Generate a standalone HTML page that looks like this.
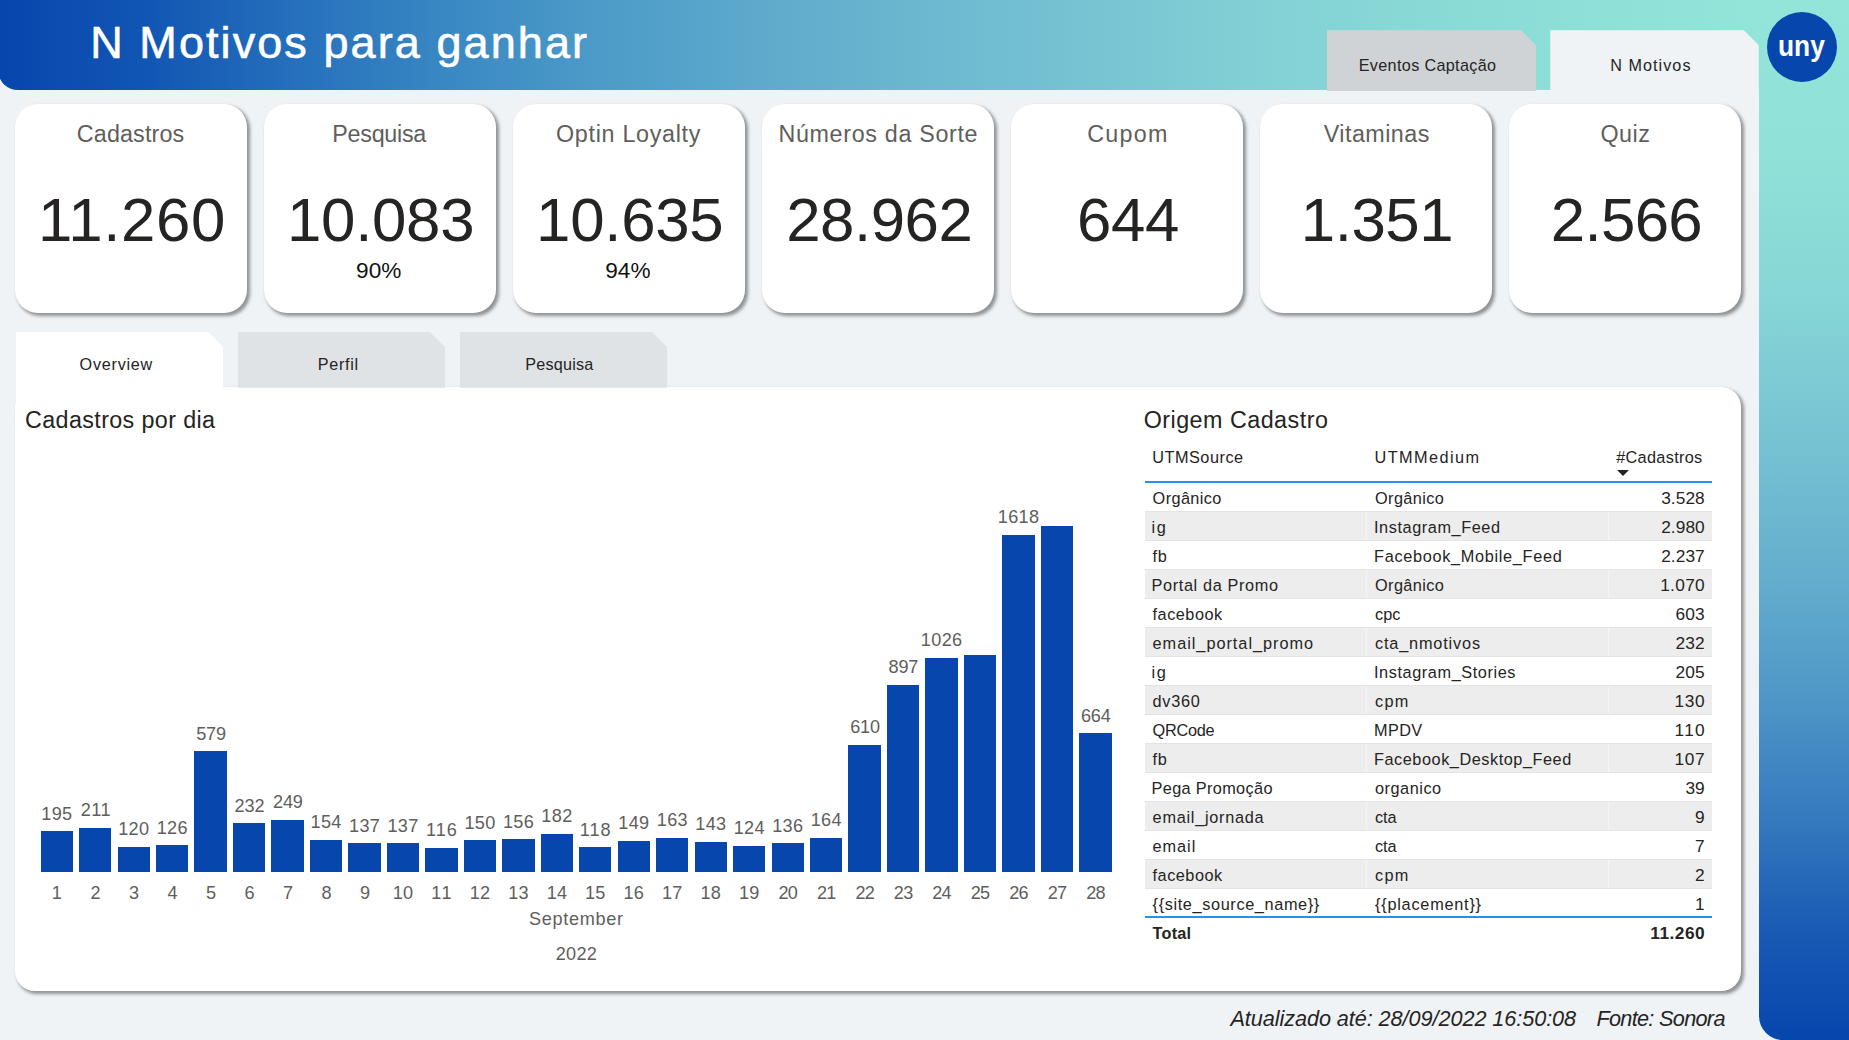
<!DOCTYPE html>
<html lang="pt-BR"><head><meta charset="utf-8"><title>N Motivos para ganhar</title>
<style>
html,body{margin:0;padding:0;}
body{width:1849px;height:1040px;overflow:hidden;position:relative;background:#eff3f6;font-family:"Liberation Sans", sans-serif;}
.abs{position:absolute;}
.t{color:#252423;position:absolute;white-space:nowrap;line-height:1;margin:0;padding:0;}
.hdr{left:-2.5px;top:0;width:1762.5px;height:89.6px;border-bottom-left-radius:20px;
 background:linear-gradient(to right,#0646ad 0px,#1256b4 150px,#2670bc 300px,#3a88c3 450px,#4c9bc8 600px,#5ca9cc 750px,#6cb8d0 924px,#78c4d3 1100px,#82d0d5 1250px,#88d8d6 1400px,#90e2d8 1650px,#92e5d9 1760px);}
.side{left:1759px;top:0;width:90px;height:1040px;border-bottom-left-radius:24px;
 background:linear-gradient(to bottom,#92e5d9 0px,#90e2d8 150px,#86d6d6 300px,#76c1d2 450px,#64adcd 580px,#4d97c7 700px,#337abe 820px,#185bb4 930px,#0646ad 1040px);}
.card{background:#fff;border-radius:23px;box-shadow:2.5px 2.5px 3.5px rgba(0,0,0,.4);}
.tab{position:absolute;}
.panel{background:#fff;border-radius:20px;box-shadow:2.5px 2.5px 3.5px rgba(0,0,0,.4);}
.bar{position:absolute;background:#0646ad;}
.row{position:absolute;left:1144.5px;width:567px;height:29px;box-sizing:border-box;}
.row.g{background:#ededed;height:30px;}
.row i{position:absolute;top:1px;bottom:1px;width:1px;background:#f4f4f4;}
.gl{position:absolute;left:1144.5px;width:567px;height:1px;background:#e4e4e4;}

</style></head><body>
<header class="g-header">
<div class="abs hdr"></div>
<div class="abs side"></div>
<div class="tab" style="left:1326.7px;top:30.2px;width:209.2px;height:60.7px;background:#d0d3d6;clip-path:polygon(0 0,194.2px 0,209.2px 15px,209.2px 60.7px,0 60.7px);"></div>
<div class="tab" style="left:1550.3px;top:30.2px;width:208.5px;height:61.8px;background:#eff3f6;clip-path:polygon(0 0,193.5px 0,208.5px 15px,208.5px 61.8px,0 61.8px);"></div>
<div class="abs" style="left:1766.8px;top:12.2px;width:70.2px;height:70.2px;border-radius:50%;background:#0646ad;"></div>
<div class="t" style="left:1358.70px;top:57px;font-size:16.2px;letter-spacing:0.341px;">Eventos Captação</div>
<div class="t" style="left:1610.20px;top:57px;font-size:16.2px;letter-spacing:1.042px;">N Motivos</div>
<div class="t" style="left:1777.92px;top:31px;font-size:30px;color:#fff;font-weight:bold;transform:scaleX(0.8775);transform-origin:0 50%;">uny</div>
<div class="t" style="left:90.20px;top:20px;font-size:45px;color:#fff;-webkit-text-stroke:0.6px #fff;letter-spacing:2.078px;">N Motivos para ganhar</div>
</header>
<section class="g-kpis">
<div class="abs card" style="left:14.6px;top:104.3px;width:232.3px;height:208.7px;"></div>
<div class="abs card" style="left:263.7px;top:104.3px;width:232.3px;height:208.7px;"></div>
<div class="abs card" style="left:512.8px;top:104.3px;width:232.3px;height:208.7px;"></div>
<div class="abs card" style="left:761.9px;top:104.3px;width:232.3px;height:208.7px;"></div>
<div class="abs card" style="left:1011.0px;top:104.3px;width:232.3px;height:208.7px;"></div>
<div class="abs card" style="left:1260.1px;top:104.3px;width:232.3px;height:208.7px;"></div>
<div class="abs card" style="left:1509.2px;top:104.3px;width:232.3px;height:208.7px;"></div>
<div class="t" style="left:76.80px;top:123px;font-size:23.3px;color:#605e5c;letter-spacing:0.158px;">Cadastros</div>
<div class="t" style="left:37.91px;top:189px;font-size:61.8px;letter-spacing:0.625px;">11.260</div>
<div class="t" style="left:332.25px;top:123px;font-size:23.3px;color:#605e5c;letter-spacing:-0.255px;">Pesquisa</div>
<div class="t" style="left:287.01px;top:189px;font-size:61.8px;letter-spacing:-0.293px;">10.083</div>
<div class="t" style="left:356.07px;top:260px;font-size:22.6px;color:#111;letter-spacing:0.064px;">90%</div>
<div class="t" style="left:556.04px;top:123px;font-size:23.3px;color:#605e5c;letter-spacing:0.700px;">Optin Loyalty</div>
<div class="t" style="left:536.11px;top:189px;font-size:61.8px;letter-spacing:-0.293px;">10.635</div>
<div class="t" style="left:605.17px;top:260px;font-size:22.6px;color:#111;letter-spacing:0.064px;">94%</div>
<div class="t" style="left:778.38px;top:123px;font-size:23.3px;color:#605e5c;letter-spacing:0.676px;">Números da Sorte</div>
<div class="t" style="left:786.21px;top:189px;font-size:61.8px;letter-spacing:-0.493px;">28.962</div>
<div class="t" style="left:1087.24px;top:123px;font-size:23.3px;color:#605e5c;letter-spacing:1.258px;">Cupom</div>
<div class="t" style="left:1076.88px;top:189px;font-size:61.8px;letter-spacing:-0.346px;">644</div>
<div class="t" style="left:1323.75px;top:123px;font-size:23.3px;color:#605e5c;letter-spacing:0.459px;">Vitaminas</div>
<div class="t" style="left:1300.71px;top:189px;font-size:61.8px;letter-spacing:-0.426px;">1.351</div>
<div class="t" style="left:1600.40px;top:123px;font-size:23.3px;color:#605e5c;letter-spacing:0.513px;">Quiz</div>
<div class="t" style="left:1550.81px;top:189px;font-size:61.8px;letter-spacing:-0.676px;">2.566</div>
</section>
<nav class="g-panel">
<div class="abs panel" style="left:14.5px;top:387px;width:1726.5px;height:603.6px;"></div>
<div class="tab" style="left:15.7px;top:332px;width:207.6px;height:68.0px;background:#fff;clip-path:polygon(0 0,192.6px 0,207.6px 15px,207.6px 68.0px,0 68.0px);"></div>
<div class="tab" style="left:237.9px;top:332px;width:207.1px;height:55.8px;background:#dfe3e6;clip-path:polygon(0 0,192.1px 0,207.1px 15px,207.1px 55.8px,0 55.8px);"></div>
<div class="tab" style="left:460px;top:332px;width:206.9px;height:55.8px;background:#dfe3e6;clip-path:polygon(0 0,191.9px 0,206.9px 15px,206.9px 55.8px,0 55.8px);"></div>
<div class="t" style="left:79.60px;top:356px;font-size:16.2px;letter-spacing:0.747px;">Overview</div>
<div class="t" style="left:317.80px;top:356px;font-size:16.2px;letter-spacing:0.663px;">Perfil</div>
<div class="t" style="left:525.30px;top:356px;font-size:16.2px;letter-spacing:0.202px;">Pesquisa</div>
</nav>
<section class="g-chart">
<div class="bar" style="left:40.60px;top:831.10px;width:32.3px;height:40.60px;"></div>
<div class="bar" style="left:79.07px;top:827.77px;width:32.3px;height:43.93px;"></div>
<div class="bar" style="left:117.54px;top:846.72px;width:32.3px;height:24.98px;"></div>
<div class="bar" style="left:156.01px;top:845.47px;width:32.3px;height:26.23px;"></div>
<div class="bar" style="left:194.48px;top:751.15px;width:32.3px;height:120.55px;"></div>
<div class="bar" style="left:232.95px;top:823.40px;width:32.3px;height:48.30px;"></div>
<div class="bar" style="left:271.42px;top:819.86px;width:32.3px;height:51.84px;"></div>
<div class="bar" style="left:309.89px;top:839.64px;width:32.3px;height:32.06px;"></div>
<div class="bar" style="left:348.36px;top:843.18px;width:32.3px;height:28.52px;"></div>
<div class="bar" style="left:386.83px;top:843.18px;width:32.3px;height:28.52px;"></div>
<div class="bar" style="left:425.30px;top:847.55px;width:32.3px;height:24.15px;"></div>
<div class="bar" style="left:463.77px;top:840.47px;width:32.3px;height:31.23px;"></div>
<div class="bar" style="left:502.24px;top:839.22px;width:32.3px;height:32.48px;"></div>
<div class="bar" style="left:540.71px;top:833.81px;width:32.3px;height:37.89px;"></div>
<div class="bar" style="left:579.18px;top:847.13px;width:32.3px;height:24.57px;"></div>
<div class="bar" style="left:617.65px;top:840.68px;width:32.3px;height:31.02px;"></div>
<div class="bar" style="left:656.12px;top:837.76px;width:32.3px;height:33.94px;"></div>
<div class="bar" style="left:694.59px;top:841.93px;width:32.3px;height:29.77px;"></div>
<div class="bar" style="left:733.06px;top:845.88px;width:32.3px;height:25.82px;"></div>
<div class="bar" style="left:771.53px;top:843.38px;width:32.3px;height:28.32px;"></div>
<div class="bar" style="left:810.00px;top:837.56px;width:32.3px;height:34.14px;"></div>
<div class="bar" style="left:848.47px;top:744.70px;width:32.3px;height:127.00px;"></div>
<div class="bar" style="left:886.94px;top:684.94px;width:32.3px;height:186.76px;"></div>
<div class="bar" style="left:925.41px;top:658.09px;width:32.3px;height:213.61px;"></div>
<div class="bar" style="left:963.88px;top:654.96px;width:32.3px;height:216.74px;"></div>
<div class="bar" style="left:1002.35px;top:534.83px;width:32.3px;height:336.87px;"></div>
<div class="bar" style="left:1040.82px;top:526.09px;width:32.3px;height:345.61px;"></div>
<div class="bar" style="left:1079.29px;top:733.46px;width:32.3px;height:138.24px;"></div>
<div class="t" style="left:25.00px;top:409px;font-size:23.3px;letter-spacing:0.386px;">Cadastros por dia</div>
<div class="t" style="left:41.26px;top:805px;font-size:18.1px;color:#605e5c;letter-spacing:0.327px;">195</div>
<div class="t" style="left:51.65px;top:884px;font-size:18.1px;color:#605e5c;">1</div>
<div class="t" style="left:80.73px;top:801px;font-size:18.1px;color:#605e5c;letter-spacing:0.499px;">211</div>
<div class="t" style="left:90.62px;top:884px;font-size:18.1px;color:#605e5c;">2</div>
<div class="t" style="left:118.20px;top:820px;font-size:18.1px;color:#605e5c;letter-spacing:0.327px;">120</div>
<div class="t" style="left:129.09px;top:884px;font-size:18.1px;color:#605e5c;">3</div>
<div class="t" style="left:156.67px;top:819px;font-size:18.1px;color:#605e5c;letter-spacing:0.327px;">126</div>
<div class="t" style="left:167.56px;top:884px;font-size:18.1px;color:#605e5c;">4</div>
<div class="t" style="left:196.14px;top:725px;font-size:18.1px;color:#605e5c;letter-spacing:-0.173px;">579</div>
<div class="t" style="left:206.03px;top:884px;font-size:18.1px;color:#605e5c;">5</div>
<div class="t" style="left:234.61px;top:797px;font-size:18.1px;color:#605e5c;letter-spacing:-0.173px;">232</div>
<div class="t" style="left:244.50px;top:884px;font-size:18.1px;color:#605e5c;">6</div>
<div class="t" style="left:273.08px;top:793px;font-size:18.1px;color:#605e5c;letter-spacing:-0.173px;">249</div>
<div class="t" style="left:282.97px;top:884px;font-size:18.1px;color:#605e5c;">7</div>
<div class="t" style="left:310.55px;top:813px;font-size:18.1px;color:#605e5c;letter-spacing:0.327px;">154</div>
<div class="t" style="left:321.44px;top:884px;font-size:18.1px;color:#605e5c;">8</div>
<div class="t" style="left:349.02px;top:817px;font-size:18.1px;color:#605e5c;letter-spacing:0.327px;">137</div>
<div class="t" style="left:359.91px;top:884px;font-size:18.1px;color:#605e5c;">9</div>
<div class="t" style="left:387.49px;top:817px;font-size:18.1px;color:#605e5c;letter-spacing:0.327px;">137</div>
<div class="t" style="left:392.75px;top:884px;font-size:18.1px;color:#605e5c;letter-spacing:0.206px;">10</div>
<div class="t" style="left:425.96px;top:821px;font-size:18.1px;color:#605e5c;letter-spacing:0.999px;">116</div>
<div class="t" style="left:431.22px;top:884px;font-size:18.1px;color:#605e5c;letter-spacing:1.549px;">11</div>
<div class="t" style="left:464.43px;top:814px;font-size:18.1px;color:#605e5c;letter-spacing:0.327px;">150</div>
<div class="t" style="left:469.69px;top:884px;font-size:18.1px;color:#605e5c;letter-spacing:0.206px;">12</div>
<div class="t" style="left:502.90px;top:813px;font-size:18.1px;color:#605e5c;letter-spacing:0.327px;">156</div>
<div class="t" style="left:508.16px;top:884px;font-size:18.1px;color:#605e5c;letter-spacing:0.206px;">13</div>
<div class="t" style="left:541.37px;top:807px;font-size:18.1px;color:#605e5c;letter-spacing:0.327px;">182</div>
<div class="t" style="left:546.63px;top:884px;font-size:18.1px;color:#605e5c;letter-spacing:0.206px;">14</div>
<div class="t" style="left:579.84px;top:821px;font-size:18.1px;color:#605e5c;letter-spacing:0.999px;">118</div>
<div class="t" style="left:585.10px;top:884px;font-size:18.1px;color:#605e5c;letter-spacing:0.206px;">15</div>
<div class="t" style="left:618.31px;top:814px;font-size:18.1px;color:#605e5c;letter-spacing:0.327px;">149</div>
<div class="t" style="left:623.57px;top:884px;font-size:18.1px;color:#605e5c;letter-spacing:0.206px;">16</div>
<div class="t" style="left:656.78px;top:811px;font-size:18.1px;color:#605e5c;letter-spacing:0.327px;">163</div>
<div class="t" style="left:662.04px;top:884px;font-size:18.1px;color:#605e5c;letter-spacing:0.206px;">17</div>
<div class="t" style="left:695.25px;top:815px;font-size:18.1px;color:#605e5c;letter-spacing:0.327px;">143</div>
<div class="t" style="left:700.51px;top:884px;font-size:18.1px;color:#605e5c;letter-spacing:0.206px;">18</div>
<div class="t" style="left:733.72px;top:819px;font-size:18.1px;color:#605e5c;letter-spacing:0.327px;">124</div>
<div class="t" style="left:738.98px;top:884px;font-size:18.1px;color:#605e5c;letter-spacing:0.206px;">19</div>
<div class="t" style="left:772.19px;top:817px;font-size:18.1px;color:#605e5c;letter-spacing:0.327px;">136</div>
<div class="t" style="left:778.45px;top:884px;font-size:18.1px;color:#605e5c;letter-spacing:-0.794px;">20</div>
<div class="t" style="left:810.66px;top:811px;font-size:18.1px;color:#605e5c;letter-spacing:0.327px;">164</div>
<div class="t" style="left:816.92px;top:884px;font-size:18.1px;color:#605e5c;letter-spacing:-0.794px;">21</div>
<div class="t" style="left:850.13px;top:718px;font-size:18.1px;color:#605e5c;letter-spacing:-0.173px;">610</div>
<div class="t" style="left:855.39px;top:884px;font-size:18.1px;color:#605e5c;letter-spacing:-0.794px;">22</div>
<div class="t" style="left:888.60px;top:658px;font-size:18.1px;color:#605e5c;letter-spacing:-0.173px;">897</div>
<div class="t" style="left:893.86px;top:884px;font-size:18.1px;color:#605e5c;letter-spacing:-0.794px;">23</div>
<div class="t" style="left:920.81px;top:631px;font-size:18.1px;color:#605e5c;letter-spacing:0.368px;">1026</div>
<div class="t" style="left:932.33px;top:884px;font-size:18.1px;color:#605e5c;letter-spacing:-0.794px;">24</div>
<div class="t" style="left:970.80px;top:884px;font-size:18.1px;color:#605e5c;letter-spacing:-0.794px;">25</div>
<div class="t" style="left:997.75px;top:508px;font-size:18.1px;color:#605e5c;letter-spacing:0.368px;">1618</div>
<div class="t" style="left:1009.27px;top:884px;font-size:18.1px;color:#605e5c;letter-spacing:-0.794px;">26</div>
<div class="t" style="left:1047.74px;top:884px;font-size:18.1px;color:#605e5c;letter-spacing:-0.794px;">27</div>
<div class="t" style="left:1080.95px;top:707px;font-size:18.1px;color:#605e5c;letter-spacing:-0.173px;">664</div>
<div class="t" style="left:1086.21px;top:884px;font-size:18.1px;color:#605e5c;letter-spacing:-0.794px;">28</div>
<div class="t" style="left:529.00px;top:910px;font-size:18.1px;color:#605e5c;letter-spacing:0.690px;">September</div>
<div class="t" style="left:555.70px;top:945px;font-size:18.1px;color:#605e5c;letter-spacing:0.304px;">2022</div>
</section>
<section class="g-table">
<div class="abs" style="left:1616.5px;top:469.5px;width:0;height:0;border-left:6.5px solid transparent;border-right:6.5px solid transparent;border-top:6.5px solid #252423;"></div>
<div class="abs" style="left:1144.5px;top:481.2px;width:567px;height:1.6px;background:#2290f5;"></div>
<div class="row g" style="top:511px;"><i style="left:221px"></i><i style="left:463px"></i></div>
<div class="gl" style="top:511px;"></div>
<div class="gl" style="top:540px;"></div>
<div class="row g" style="top:569px;"><i style="left:221px"></i><i style="left:463px"></i></div>
<div class="gl" style="top:569px;"></div>
<div class="gl" style="top:598px;"></div>
<div class="row g" style="top:627px;"><i style="left:221px"></i><i style="left:463px"></i></div>
<div class="gl" style="top:627px;"></div>
<div class="gl" style="top:656px;"></div>
<div class="row g" style="top:685px;"><i style="left:221px"></i><i style="left:463px"></i></div>
<div class="gl" style="top:685px;"></div>
<div class="gl" style="top:714px;"></div>
<div class="row g" style="top:743px;"><i style="left:221px"></i><i style="left:463px"></i></div>
<div class="gl" style="top:743px;"></div>
<div class="gl" style="top:772px;"></div>
<div class="row g" style="top:801px;"><i style="left:221px"></i><i style="left:463px"></i></div>
<div class="gl" style="top:801px;"></div>
<div class="gl" style="top:830px;"></div>
<div class="row g" style="top:859px;"><i style="left:221px"></i><i style="left:463px"></i></div>
<div class="gl" style="top:859px;"></div>
<div class="gl" style="top:888px;"></div>
<div class="abs" style="left:1144.5px;top:916px;width:567px;height:1.6px;background:#2290f5;"></div>
<div class="t" style="left:1143.65px;top:409px;font-size:23.3px;letter-spacing:0.488px;">Origem Cadastro</div>
<div class="t" style="left:1152.20px;top:449px;font-size:16.3px;letter-spacing:0.513px;">UTMSource</div>
<div class="t" style="left:1374.60px;top:449px;font-size:16.3px;letter-spacing:1.411px;">UTMMedium</div>
<div class="t" style="left:1616.20px;top:449px;font-size:16.3px;letter-spacing:0.309px;">#Cadastros</div>
<div class="t" style="left:1152.60px;top:490px;font-size:16.3px;letter-spacing:0.385px;">Orgânico</div>
<div class="t" style="left:1375.00px;top:490px;font-size:16.3px;letter-spacing:0.399px;">Orgânico</div>
<div class="t" style="left:1661.20px;top:490px;font-size:17.3px;letter-spacing:0.066px;">3.528</div>
<div class="t" style="left:1151.60px;top:519px;font-size:16.3px;letter-spacing:1.467px;">ig</div>
<div class="t" style="left:1374.00px;top:519px;font-size:16.3px;letter-spacing:0.577px;">Instagram_Feed</div>
<div class="t" style="left:1661.20px;top:519px;font-size:17.3px;letter-spacing:0.066px;">2.980</div>
<div class="t" style="left:1152.60px;top:548px;font-size:16.3px;letter-spacing:0.677px;">fb</div>
<div class="t" style="left:1374.00px;top:548px;font-size:16.3px;letter-spacing:0.688px;">Facebook_Mobile_Feed</div>
<div class="t" style="left:1661.20px;top:548px;font-size:17.3px;letter-spacing:0.066px;">2.237</div>
<div class="t" style="left:1151.60px;top:577px;font-size:16.3px;letter-spacing:0.622px;">Portal da Promo</div>
<div class="t" style="left:1375.00px;top:577px;font-size:16.3px;letter-spacing:0.399px;">Orgânico</div>
<div class="t" style="left:1660.20px;top:577px;font-size:17.3px;letter-spacing:0.316px;">1.070</div>
<div class="t" style="left:1152.60px;top:606px;font-size:16.3px;letter-spacing:0.495px;">facebook</div>
<div class="t" style="left:1375.00px;top:606px;font-size:16.3px;">cpc</div>
<div class="t" style="left:1675.50px;top:606px;font-size:17.3px;letter-spacing:0.189px;">603</div>
<div class="t" style="left:1152.60px;top:635px;font-size:16.3px;letter-spacing:0.974px;">email_portal_promo</div>
<div class="t" style="left:1375.00px;top:635px;font-size:16.3px;letter-spacing:0.829px;">cta_nmotivos</div>
<div class="t" style="left:1675.50px;top:635px;font-size:17.3px;letter-spacing:0.189px;">232</div>
<div class="t" style="left:1151.60px;top:664px;font-size:16.3px;letter-spacing:1.467px;">ig</div>
<div class="t" style="left:1374.00px;top:664px;font-size:16.3px;letter-spacing:0.583px;">Instagram_Stories</div>
<div class="t" style="left:1675.50px;top:664px;font-size:17.3px;letter-spacing:0.189px;">205</div>
<div class="t" style="left:1152.60px;top:693px;font-size:16.3px;letter-spacing:0.724px;">dv360</div>
<div class="t" style="left:1375.00px;top:693px;font-size:16.3px;letter-spacing:1.252px;">cpm</div>
<div class="t" style="left:1674.50px;top:693px;font-size:17.3px;letter-spacing:0.689px;">130</div>
<div class="t" style="left:1152.60px;top:722px;font-size:16.3px;letter-spacing:-0.278px;">QRCode</div>
<div class="t" style="left:1374.00px;top:722px;font-size:16.3px;letter-spacing:0.373px;">MPDV</div>
<div class="t" style="left:1674.50px;top:722px;font-size:17.3px;letter-spacing:1.331px;">110</div>
<div class="t" style="left:1152.60px;top:751px;font-size:16.3px;letter-spacing:0.677px;">fb</div>
<div class="t" style="left:1374.00px;top:751px;font-size:16.3px;letter-spacing:0.540px;">Facebook_Desktop_Feed</div>
<div class="t" style="left:1674.50px;top:751px;font-size:17.3px;letter-spacing:0.689px;">107</div>
<div class="t" style="left:1151.60px;top:780px;font-size:16.3px;letter-spacing:0.342px;">Pega Promoção</div>
<div class="t" style="left:1375.00px;top:780px;font-size:16.3px;letter-spacing:0.529px;">organico</div>
<div class="t" style="left:1685.40px;top:780px;font-size:17.3px;letter-spacing:0.089px;">39</div>
<div class="t" style="left:1152.60px;top:809px;font-size:16.3px;letter-spacing:0.732px;">email_jornada</div>
<div class="t" style="left:1375.00px;top:809px;font-size:16.3px;letter-spacing:-0.082px;">cta</div>
<div class="t" style="left:1695.10px;top:809px;font-size:17.3px;">9</div>
<div class="t" style="left:1152.60px;top:838px;font-size:16.3px;letter-spacing:0.953px;">email</div>
<div class="t" style="left:1375.00px;top:838px;font-size:16.3px;letter-spacing:-0.082px;">cta</div>
<div class="t" style="left:1695.10px;top:838px;font-size:17.3px;">7</div>
<div class="t" style="left:1152.60px;top:867px;font-size:16.3px;letter-spacing:0.495px;">facebook</div>
<div class="t" style="left:1375.00px;top:867px;font-size:16.3px;letter-spacing:1.252px;">cpm</div>
<div class="t" style="left:1695.10px;top:867px;font-size:17.3px;">2</div>
<div class="t" style="left:1152.60px;top:896px;font-size:16.3px;letter-spacing:0.624px;">{{site_source_name}}</div>
<div class="t" style="left:1375.00px;top:896px;font-size:16.3px;letter-spacing:0.764px;">{{placement}}</div>
<div class="t" style="left:1695.10px;top:896px;font-size:17.3px;">1</div>
<div class="t" style="left:1152.60px;top:925px;font-size:16.3px;font-weight:bold;letter-spacing:0.210px;">Total</div>
<div class="t" style="left:1650.30px;top:925px;font-size:17.3px;font-weight:bold;letter-spacing:0.502px;">11.260</div>
</section>
<footer class="g-footer">
<div class="t" style="left:1230.40px;top:1008px;font-size:21.7px;font-style:italic;letter-spacing:-0.080px;">Atualizado até: 28/09/2022 16:50:08</div>
<div class="t" style="left:1596.40px;top:1008px;font-size:21.7px;font-style:italic;letter-spacing:-0.698px;">Fonte: Sonora</div>
</footer>
</body></html>
